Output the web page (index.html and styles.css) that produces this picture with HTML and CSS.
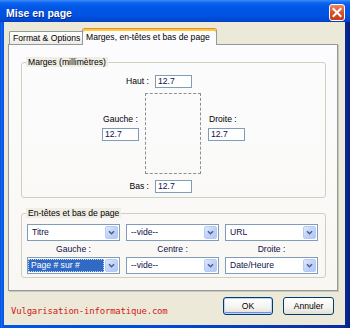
FILE: index.html
```html
<!DOCTYPE html>
<html lang="fr">
<head>
<meta charset="utf-8">
<title>Mise en page</title>
<link rel="stylesheet" href="styles.css">
</head>
<body>
<div class="window">
  <div class="titlebar">
    <span class="title">Mise en page</span>
    <span class="close" aria-label="Fermer">
      <svg width="16" height="17" viewBox="0 0 16 17">
        <defs>
          <linearGradient id="cg" x1="0" y1="0" x2="0" y2="1">
            <stop offset="0" stop-color="#EE8A6A"/>
            <stop offset="0.5" stop-color="#D9522E"/>
            <stop offset="1" stop-color="#C13B1A"/>
          </linearGradient>
        </defs>
        <rect x="0.5" y="0.5" width="15" height="16" rx="2.5" fill="url(#cg)" stroke="#FFFFFF"/>
        <path d="M4.5 5 L11.5 12 M11.5 5 L4.5 12" stroke="#FFFFFF" stroke-width="2" stroke-linecap="square"/>
      </svg>
    </span>
  </div>
  <div class="client">
    <div class="tabs">
      <div class="tab">Format &amp; Options</div>
      <div class="tab active">Marges, en-têtes et bas de page</div>
    </div>
    <div class="panel">
      <fieldset class="group margins">
        <legend>Marges (millimètres)</legend>
        <div class="margins-body">
          <div class="edge-row">
            <span class="edge-label">Haut :</span>
            <span class="field">12.7</span>
          </div>
          <div class="mid">
            <div class="side">
              <span class="side-label">Gauche :</span>
              <span class="field">12.7</span>
            </div>
            <div class="page-box"></div>
            <div class="side">
              <span class="side-label">Droite :</span>
              <span class="field">12.7</span>
            </div>
          </div>
          <div class="edge-row bottom">
            <span class="edge-label">Bas :</span>
            <span class="field">12.7</span>
          </div>
        </div>
      </fieldset>
      <fieldset class="group headers">
        <legend>En-têtes et bas de page</legend>
        <div class="combo-grid">
          <div class="combo"><span class="val">Titre</span><span class="arrow"><svg width="13" height="13" viewBox="0 0 13 13"><path d="M3.5 5 L6.5 8 L9.5 5" fill="none" stroke="#4D6185" stroke-width="1.8"/></svg></span></div>
          <div class="combo"><span class="val">--vide--</span><span class="arrow"><svg width="13" height="13" viewBox="0 0 13 13"><path d="M3.5 5 L6.5 8 L9.5 5" fill="none" stroke="#4D6185" stroke-width="1.8"/></svg></span></div>
          <div class="combo"><span class="val">URL</span><span class="arrow"><svg width="13" height="13" viewBox="0 0 13 13"><path d="M3.5 5 L6.5 8 L9.5 5" fill="none" stroke="#4D6185" stroke-width="1.8"/></svg></span></div>
          <span class="col-label">Gauche :</span>
          <span class="col-label">Centre :</span>
          <span class="col-label">Droite :</span>
          <div class="combo"><span class="val selected">Page # sur #</span><span class="arrow"><svg width="13" height="13" viewBox="0 0 13 13"><path d="M3.5 5 L6.5 8 L9.5 5" fill="none" stroke="#4D6185" stroke-width="1.8"/></svg></span></div>
          <div class="combo"><span class="val">--vide--</span><span class="arrow"><svg width="13" height="13" viewBox="0 0 13 13"><path d="M3.5 5 L6.5 8 L9.5 5" fill="none" stroke="#4D6185" stroke-width="1.8"/></svg></span></div>
          <div class="combo"><span class="val">Date/Heure</span><span class="arrow"><svg width="13" height="13" viewBox="0 0 13 13"><path d="M3.5 5 L6.5 8 L9.5 5" fill="none" stroke="#4D6185" stroke-width="1.8"/></svg></span></div>
        </div>
      </fieldset>
    </div>
    <div class="footer">
      <span class="brand">Vulgarisation-informatique.com</span>
      <div class="buttons">
        <button class="btn default" type="button">OK</button>
        <button class="btn" type="button">Annuler</button>
      </div>
    </div>
  </div>
</div>
</body>
</html>
```

FILE: styles.css
```css
html, body {
  margin: 0;
  padding: 0;
  background: #FFFFFF;
}

body {
  font-family: "Liberation Sans", Arial, sans-serif;
  font-size: 8.6px;
  color: #000000;
}

.window {
  width: 350px;
  height: 328px;
  display: flex;
  flex-direction: column;
  background: linear-gradient(90deg, #0041C8 0px, #1A6AF2 1px, #0056E8 3px, #0049D6 50%, #0A2C9E 98%, #06207E 100%);
  box-sizing: border-box;
}

.titlebar {
  height: 22px;
  flex: none;
  display: flex;
  align-items: flex-start;
  justify-content: space-between;
  padding: 0 5px 0 6px;
  background: linear-gradient(180deg, #3A8EF8 0px, #0C62EE 3px, #0056E6 8px, #0053E2 15px, #0049D4 20px, #003FBE 22px);
}

.title {
  margin-top: 7px;
  font-family: "Liberation Sans", Arial, sans-serif;
  font-weight: bold;
  font-size: 10.5px;
  line-height: 12px;
  color: #FFFFFF;
  text-shadow: 1px 1px 0 #0A2A8A;
}

.close {
  display: flex;
  margin-top: 4px;
}

.client {
  flex: 1;
  margin: 0 5px 3px 4px;
  background: #ECE9D8;
  display: flex;
  flex-direction: column;
  padding: 6px 7px 0 4px;
}

.tabs {
  display: flex;
  align-items: flex-end;
  padding-left: 1px;
}

.tab {
  height: 13px;
  box-sizing: border-box;
  padding: 0 3px;
  line-height: 12px;
  border: 1px solid #919B9C;
  border-bottom: none;
  border-right: none;
  border-radius: 2px 0 0 0;
  background: linear-gradient(180deg, #FFFFFF 0%, #F7F6F2 50%, #ECEBE5 100%);
  white-space: nowrap;
  width: 73px;
}

.tab.active {
  position: relative;
  z-index: 1;
  width: 135px;
  height: 17px;
  margin-bottom: -1px;
  padding: 1px 4px 0 3px;
  border-right: 1px solid #919B9C;
  border-top: 1px solid #E68B2C;
  border-radius: 3px 3px 0 0;
  box-shadow: inset 0 2px 0 #FFC73C;
  background: #FCFCFE;
  line-height: 13px;
  padding-top: 2px;
}

.panel {
  box-sizing: border-box;
  border: 1px solid #919B9C;
  background: linear-gradient(180deg, #FCFCFE 0%, #F8F7F3 100%);
  box-shadow: 1px 1px 0 #C8C6B6;
  padding: 12px 11px 12px 12px;
}

.group {
  margin: 0;
  min-width: 0;
  border: 1px solid #D0D0BF;
  border-radius: 3px;
  padding: 0 4px;
}

.group legend {
  margin-left: 0;
  padding: 0 2px;
  line-height: 10px;
  background: #F0EEE4;
  color: #000000;
}

.margins {
  padding-top: 8px;
  padding-bottom: 4px;
}

.margins-body {
  margin-left: 76px;
}

.edge-row {
  display: flex;
  align-items: center;
  gap: 6px;
  height: 13px;
}

.edge-row.bottom {
  margin-top: 6px;
}

.edge-label {
  width: 47px;
  text-align: right;
  line-height: 11px;
  white-space: nowrap;
}

.field {
  display: block;
  box-sizing: border-box;
  width: 37px;
  height: 13px;
  border: 1px solid #7F9DB9;
  background: #FFFFFF;
  padding-left: 2px;
  line-height: 11px;
  color: #10104A;
}

.mid {
  margin-top: 5px;
  display: grid;
  grid-template-columns: 36px 56px 37px;
  column-gap: 7px;
}

.side {
  display: flex;
  flex-direction: column;
  align-items: flex-start;
  gap: 3px;
  margin-top: 21px;
}

.side-label {
  line-height: 11px;
  white-space: nowrap;
  padding-left: 1px;
}

.page-box {
  height: 81px;
  box-sizing: border-box;
  border: 1px dashed #8E8E8E;
}

.headers {
  margin-top: 10px;
  padding-top: 6px;
  padding-bottom: 3px;
}

.combo-grid {
  margin-left: 1px;
  display: grid;
  grid-template-columns: 93px 93px 93px;
  column-gap: 6px;
  grid-template-rows: 17px 16px 17px;
}

.combo {
  box-sizing: border-box;
  height: 17px;
  border: 1px solid #7F9DB9;
  background: #FFFFFF;
  display: flex;
}

.val {
  flex: 1;
  padding-left: 4px;
  line-height: 15px;
  color: #10104A;
  white-space: nowrap;
}

.val.selected {
  margin: 1px 1px 1px 0;
  line-height: 13px;
  padding-left: 3px;
  background: #316AC5;
  color: #FFFFFF;
  outline: 1px dotted #C9D6F0;
  outline-offset: -1px;
}

.arrow {
  width: 13px;
  margin: 1px 1px 1px 0;
  box-sizing: border-box;
  border-radius: 2px;
  background: linear-gradient(135deg, #E0EAFE 0%, #C3D5FB 45%, #B2C7F6 100%);
  border: 1px solid #B6CAF4;
  display: flex;
  align-items: center;
  justify-content: center;
}

.arrow svg {
  display: block;
}

.col-label {
  text-align: center;
  line-height: 16px;
  color: #10104A;
}

.footer {
  display: flex;
  align-items: flex-end;
  margin-top: 6px;
  height: 18px;
  padding: 0 4px 0 3px;
}

.brand {
  font-family: "DejaVu Sans Mono", "Liberation Mono", monospace;
  font-size: 9px;
  letter-spacing: -0.2px;
  line-height: 11px;
  color: #D01818;
  margin-bottom: -2px;
}

.buttons {
  margin-left: auto;
  display: flex;
  gap: 10px;
  align-self: stretch;
}

.btn {
  box-sizing: border-box;
  height: 18px;
  width: 51px;
  padding: 0;
  margin: 0;
  border: 1px solid #003C74;
  border-radius: 3px;
  background: linear-gradient(180deg, #FFFFFF 0%, #F5F4EF 55%, #E3E0D6 100%);
  font-family: "Liberation Sans", Arial, sans-serif;
  font-size: 8.6px;
  color: #000000;
}

.btn.default {
  width: 50px;
  box-shadow: inset 0 0 0 1px #BFD6FA, inset 0 -1px 0 1px #6D8FEA;
}
```
